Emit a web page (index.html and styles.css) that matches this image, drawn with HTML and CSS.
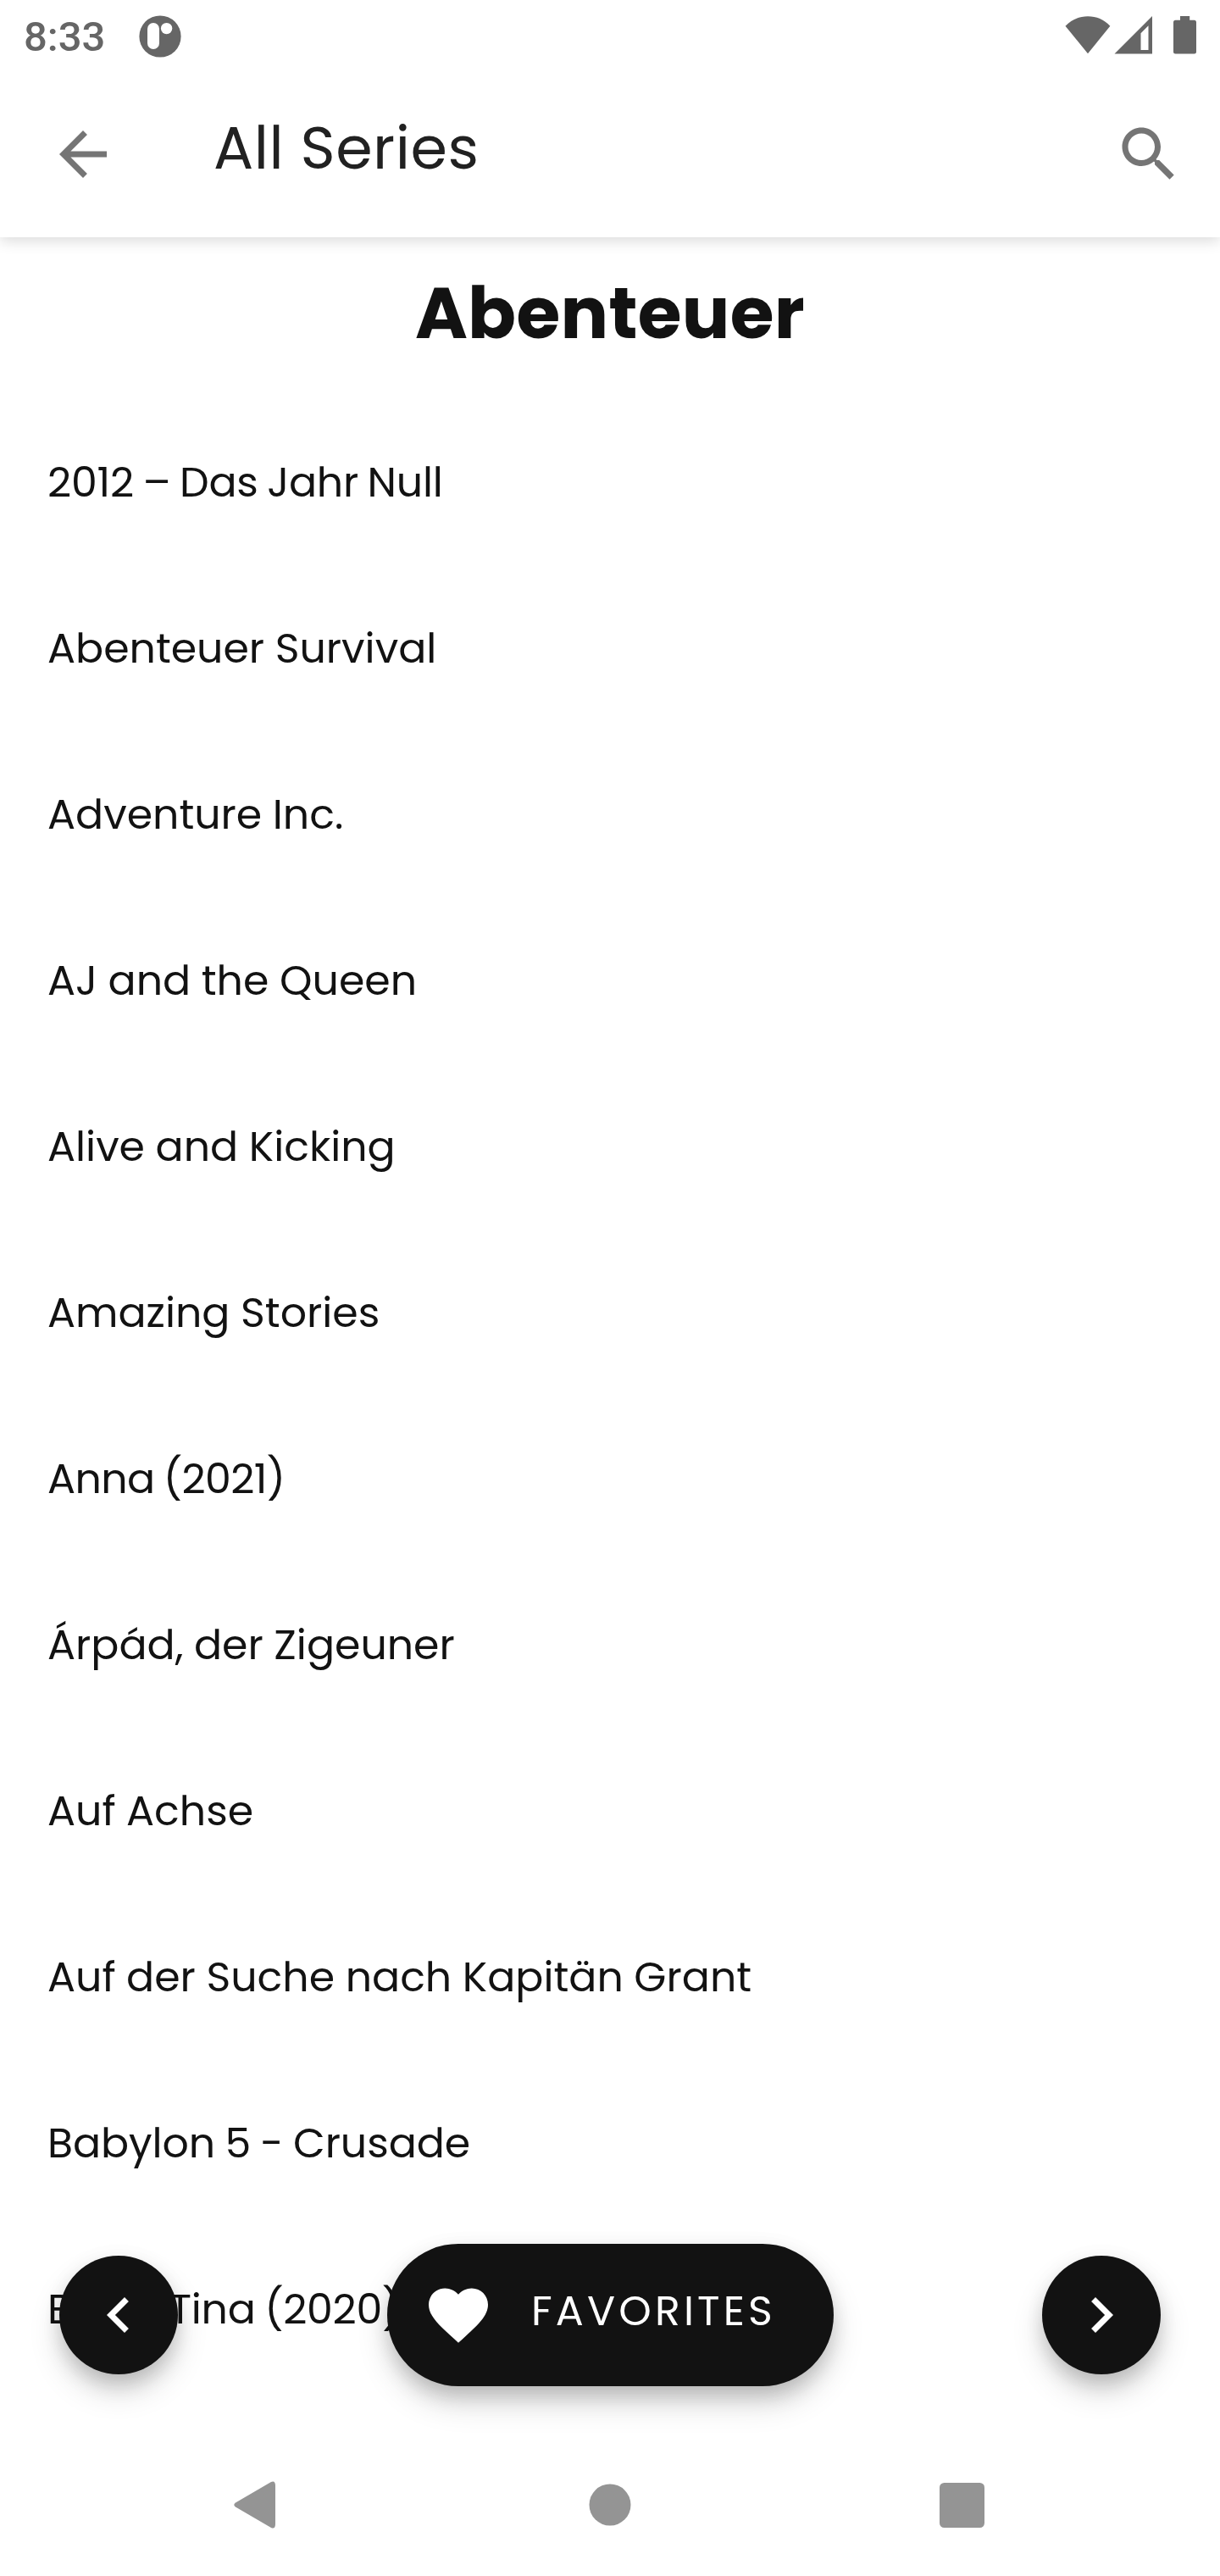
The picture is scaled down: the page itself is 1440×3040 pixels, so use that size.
FILE: index.html
```html
<!DOCTYPE html>
<html lang="en">
<head>
<meta charset="utf-8">
<title>All Series</title>
<link rel="stylesheet" href="styles.css">
</head>
<body>
<div class="screen">
  <div class="status-bar">
    <span class="clock">8:33</span>
    <svg class="app-badge" width="50" height="50" viewBox="0 0 50 50">
      <circle cx="25" cy="25" r="24.6" fill="#666"/>
      <rect x="10" y="9" width="14" height="31" rx="7" fill="#fff"/>
      <circle cx="32.6" cy="15.6" r="6.7" fill="#fff"/>
    </svg>
    <div class="system-icons">
      <svg class="wifi" width="54" height="46" viewBox="0 0 54 46"><path d="M0.5 12.7C7.500 5 17 1.200 27 1.200S46.300 5 53.300 12.700L27 45.200Z" fill="#666"/></svg>
      <svg class="signal" width="46" height="46" viewBox="0 0 46 46"><path fill-rule="evenodd" d="M45 1V45.500H0.500ZM40.500 12.300L31.500 21.300V41H40.500Z" fill="#666"/></svg>
      <svg class="battery" width="27" height="46" viewBox="0 0 27 46"><path d="M8 1H19.200V5.800H24.500Q27 5.800 27 8.300V43Q27 45.500 24.500 45.500H2.500Q0 45.500 0 43V8.300Q0 5.800 2.500 5.800H8Z" fill="#666"/></svg>
    </div>
  </div>

  <header class="app-bar">
    <svg class="back" width="84" height="84" viewBox="0 0 24 24"><path d="M20 11H7.830l5.590-5.590L12 4l-8 8 8 8 1.410-1.410L7.830 13H20v-2z" fill="#757575"/></svg>
    <h1 class="app-title">All Series</h1>
    <svg class="search" width="84" height="84" viewBox="0 0 24 24"><path d="M15.500 14h-.79l-.28-.27C15.410 12.590 16 11.110 16 9.500 16 5.910 13.090 3 9.500 3S3 5.910 3 9.500 5.910 16 9.500 16c1.610 0 3.090-.59 4.230-1.570l.27.28v.79l5 4.990L20.490 19l-4.990-5zm-6 0C7.010 14 5 11.990 5 9.500S7.010 5 9.500 5 14 7.010 14 9.500 11.990 14 9.500 14z" fill="#757575"/></svg>
  </header>

  <main class="content">
    <h2 class="genre">Abenteuer</h2>
    <ul class="series">
      <li class="numeric">2012 – Das Jahr Null</li>
      <li>Abenteuer Survival</li>
      <li>Adventure Inc.</li>
      <li>AJ and the Queen</li>
      <li>Alive and Kicking</li>
      <li>Amazing Stories</li>
      <li class="numeric year">Anna (2021)</li>
      <li>Árpád, der Zigeuner</li>
      <li>Auf Achse</li>
      <li>Auf der Suche nach Kapitän Grant</li>
      <li class="numeric dashed">Babylon 5 - Crusade</li>
      <li class="numeric">Bibi &amp; Tina (2020)</li>
    </ul>
  </main>

  <div class="actions">
    <button class="fab" aria-label="Previous"><svg width="84" height="84" viewBox="0 0 24 24"><path d="M15.410 7.410L14 6l-6 6 6 6 1.410-1.410L10.830 12z" fill="#fff"/></svg></button>
    <button class="favorites">
      <svg width="84" height="84" viewBox="0 0 24 24"><path d="M12 21.350l-1.450-1.320C5.400 15.360 2 12.280 2 8.500 2 5.420 4.420 3 7.500 3c1.740 0 3.410.81 4.500 2.090C13.090 3.810 14.760 3 16.500 3 19.580 3 22 5.420 22 8.500c0 3.780-3.400 6.860-8.550 11.540L12 21.350z" fill="#fff"/></svg>
      <span>FAVORITES</span>
    </button>
    <button class="fab" aria-label="Next"><svg width="84" height="84" viewBox="0 0 24 24"><path d="M10 6L8.590 7.410 13.170 12l-4.580 4.590L10 18l6-6z" fill="#fff"/></svg></button>
  </div>

  <nav class="nav-bar">
    <svg width="50" height="58" viewBox="0 0 50 58"><path d="M45 2L3 26.500Q-0.500 29 3 31.500L45 56Q49.800 58 50 52V6Q49.800 0 45 2Z" fill="#949494"/></svg>
    <svg width="50" height="50" viewBox="0 0 50 50"><circle cx="25" cy="25" r="24.500" fill="#949494"/></svg>
    <svg width="53" height="53" viewBox="0 0 53 53"><rect width="53" height="53" rx="5.500" fill="#949494"/></svg>
  </nav>
</div>
</body>
</html>
```
FILE: styles.css
```css
* { box-sizing: border-box; }

body {
  margin: 0;
  background: #fff;
  color: #121212;
  font-family: Poppins, Inter, sans-serif;
  font-feature-settings: "cv11";
}

h1, h2, ul { margin: 0; padding: 0; }
svg { display: block; flex: none; }

.screen {
  position: relative;
  display: flex;
  flex-direction: column;
  width: 1440px;
  height: 3040px;
  overflow: hidden;
}

.status-bar {
  position: relative;
  z-index: 2;
  display: flex;
  align-items: flex-start;
  height: 84px;
  padding: 18px 28px 0;
  background: #fff;
}
.clock {
  width: 135.500px;
  padding-top: 1px;
  font: 500 49px/50px Roboto, sans-serif;
  color: #666;
}
.system-icons { display: flex; margin-left: auto; }
.signal { margin-left: 4px; }
.battery { margin-left: 24px; }

.app-bar {
  position: relative;
  z-index: 1;
  display: flex;
  align-items: center;
  height: 196px;
  padding: 0 42px 0 56px;
  box-shadow: 0 4px 16px rgba(0, 0, 0, .15);
}
.app-title {
  margin: -15px auto 0 112px;
  font-size: 70px;
  font-weight: 400;
  line-height: 100px;
  letter-spacing: .550px;
  color: #212121;
}

.content {
  flex: 1;
  min-height: 0;
  overflow: hidden;
}

.genre {
  height: 190px;
  font-size: 84px;
  font-weight: 700;
  line-height: 179px;
  letter-spacing: .300px;
  text-align: center;
}

.series { list-style: none; }
.series li {
  height: 196px;
  padding-left: 56px;
  font-size: 49px;
  line-height: 198px;
  word-spacing: -.500px;
  white-space: nowrap;
}
.series .numeric {
  letter-spacing: -.250px;
  word-spacing: -2.200px;
}
.series .year { letter-spacing: -.600px; }
.series .dashed {
  letter-spacing: -.080px;
  word-spacing: -1.600px;
}

.actions {
  position: absolute;
  left: 70px;
  right: 70px;
  top: 2648px;
  display: flex;
  align-items: center;
  justify-content: space-between;
}
.fab, .favorites {
  display: flex;
  align-items: center;
  border: 0;
  background: #121212;
  color: #fff;
  font-family: inherit;
  box-shadow: 0 16px 24px -4px rgba(0, 0, 0, .15), 0 20px 38px rgba(0, 0, 0, .14), 0 3px 24px rgba(0, 0, 0, .05);
}
.fab {
  justify-content: center;
  width: 140px;
  height: 140px;
  padding: 0;
  border-radius: 50%;
}
.favorites {
  width: 527px;
  height: 168px;
  padding: 0 0 0 42px;
  border-radius: 84px;
}
.favorites span {
  margin: -11px 0 0 44.500px;
  font-size: 49px;
  line-height: 60px;
  letter-spacing: 4.150px;
}

.nav-bar {
  display: flex;
  align-items: center;
  height: 168px;
  padding-left: 275px;
}
.nav-bar svg + svg { margin-left: 370px; }
.nav-bar svg + svg + svg { margin-left: 364px; }
```
